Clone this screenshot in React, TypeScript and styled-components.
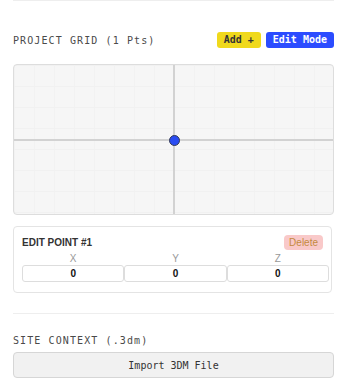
import styled, { createGlobalStyle } from "styled-components";

const GlobalStyle = createGlobalStyle`
  html, body {
    margin: 0;
    padding: 0;
    background: #ffffff;
  }
  body {
    font-family: "Liberation Sans", Arial, sans-serif;
  }
`;

const Page = styled.div`
  width: 321px;
  padding: 0 13px;
`;

const Section = styled.section<{ $top: number; $bottom: number }>`
  border-top: 1px solid #eeeeee;
  padding-top: ${(p) => p.$top}px;
  padding-bottom: ${(p) => p.$bottom}px;
  display: flex;
  flex-direction: column;
`;

const HeaderRow = styled.div`
  display: flex;
  align-items: center;
  justify-content: space-between;
  height: 16px;
`;

const Heading = styled.h3`
  margin: 0;
  font-family: "DejaVu Sans Mono", "Liberation Mono", monospace;
  font-size: 10px;
  font-weight: normal;
  letter-spacing: 1.1px;
  color: #4a4a4a;
`;

const Actions = styled.div`
  display: flex;
  gap: 5px;
`;

const PillButton = styled.button<{ $tone: "yellow" | "blue" }>`
  height: 16px;
  padding: 0 7px;
  border: none;
  border-radius: 3px;
  font-family: "DejaVu Sans Mono", "Liberation Mono", monospace;
  font-size: 10px;
  font-weight: bold;
  line-height: 16px;
  background: ${(p) => (p.$tone === "yellow" ? "#f0d91c" : "#2b4cff")};
  color: ${(p) => (p.$tone === "yellow" ? "#333333" : "#ffffff")};
`;

const GridPanel = styled.div`
  position: relative;
  margin-top: 16px;
  height: 151px;
  box-sizing: border-box;
  border: 1px solid #dddddd;
  border-radius: 4px;
  background-color: #f6f6f6;
  background-image: linear-gradient(#f1f1f1 1px, transparent 1px),
    linear-gradient(90deg, #f2f2f2 1px, transparent 1px);
  background-size: 20px 21px;
  overflow: hidden;
`;

const AxisH = styled.div`
  position: absolute;
  left: 0;
  right: 0;
  top: 74px;
  height: 2px;
  background: #d2d2d2;
`;

const AxisV = styled.div`
  position: absolute;
  top: 0;
  bottom: 0;
  left: 159px;
  width: 2px;
  background: #d2d2d2;
`;

const Point = styled.div`
  position: absolute;
  left: 155px;
  top: 70px;
  width: 9px;
  height: 9px;
  border-radius: 50%;
  background: #2a4cf2;
  border: 1px solid #333a55;
`;

const EditCard = styled.div`
  margin-top: 11px;
  width: 319px;
  box-sizing: border-box;
  border: 1px solid #e4e4e4;
  border-radius: 4px;
  padding: 8px 2px 10px 8px;
`;

const CardHead = styled.div`
  display: flex;
  justify-content: space-between;
  align-items: flex-start;
  padding-right: 6px;
`;

const CardTitle = styled.div`
  font-size: 10px;
  font-weight: bold;
  color: #333333;
  margin-top: 2px;
`;

const DeleteButton = styled.button`
  height: 15px;
  padding: 0 5px;
  border: none;
  border-radius: 4px;
  background: #f9c9c9;
  color: #c48a3e;
  font-family: "Liberation Sans", Arial, sans-serif;
  font-size: 10px;
  line-height: 15px;
`;

const CoordGrid = styled.div`
  display: grid;
  grid-template-columns: repeat(3, minmax(0, 1fr));
  margin-top: 3px;
`;

const Coord = styled.label`
  display: flex;
  flex-direction: column;
  align-items: stretch;
  min-width: 0;
`;

const CoordLabel = styled.span`
  text-align: center;
  font-size: 10px;
  line-height: 12px;
  color: #999999;
`;

const CoordInput = styled.input`
  width: 100%;
  min-width: 0;
  height: 17px;
  box-sizing: border-box;
  border: 1px solid #dddddd;
  border-radius: 3px;
  text-align: center;
  font-family: "Liberation Sans", Arial, sans-serif;
  font-size: 10px;
  font-weight: bold;
  color: #111111;
  background: #ffffff;
  padding: 0;
  outline: none;
`;

const ImportButton = styled.button`
  margin-top: 4px;
  height: 26px;
  border: 1px solid #d6d6d6;
  border-radius: 4px;
  background: #f1f1f1;
  font-family: "DejaVu Sans Mono", "Liberation Mono", monospace;
  font-size: 10px;
  color: #333333;
`;

export default function App() {
  return (
    <Page>
      <GlobalStyle />
      <Section $top={31} $bottom={20}>
        <HeaderRow>
          <Heading>PROJECT GRID (1 Pts)</Heading>
          <Actions>
            <PillButton $tone="yellow">Add +</PillButton>
            <PillButton $tone="blue">Edit Mode</PillButton>
          </Actions>
        </HeaderRow>
        <GridPanel>
          <AxisH />
          <AxisV />
          <Point />
        </GridPanel>
        <EditCard>
          <CardHead>
            <CardTitle>EDIT POINT #1</CardTitle>
            <DeleteButton>Delete</DeleteButton>
          </CardHead>
          <CoordGrid>
            {["X", "Y", "Z"].map((axis) => (
              <Coord key={axis}>
                <CoordLabel>{axis}</CoordLabel>
                <CoordInput defaultValue="0" />
              </Coord>
            ))}
          </CoordGrid>
        </EditCard>
      </Section>
      <Section $top={18} $bottom={12}>
        <HeaderRow>
          <Heading>SITE CONTEXT (.3dm)</Heading>
        </HeaderRow>
        <ImportButton>Import 3DM File</ImportButton>
      </Section>
    </Page>
  );
}
